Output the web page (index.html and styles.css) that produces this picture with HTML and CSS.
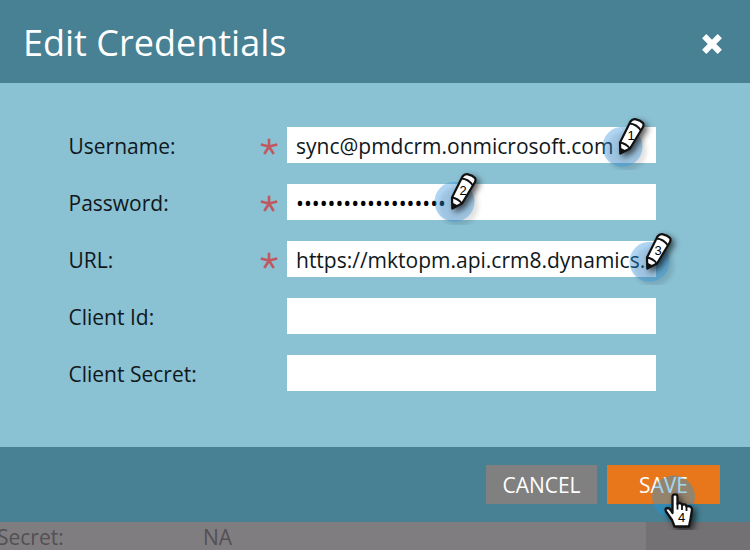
FILE: index.html
```html
<!DOCTYPE html>
<html lang="en">
<head>
<meta charset="utf-8">
<title>Edit Credentials</title>
<link rel="stylesheet" href="styles.css">
</head>
<body>
<svg class="defs" aria-hidden="true">
  <defs>
    <symbol id="close" viewBox="0 0 24 24"><path d="M4.200 4.200L19.800 19.800M19.800 4.200L4.200 19.800" stroke="#fff" stroke-width="6"/></symbol>
    <symbol id="star" viewBox="0 0 18 18"><path d="M9 8.500V0.800M9 8.500L0.800 6.500M9 8.500L17.200 6.500M9 8.500L4.300 16M9 8.500L13.700 16" stroke="#c0595f" stroke-width="2.600" fill="none"/></symbol>
    <symbol id="pen" viewBox="0 0 60 60">
      <circle class="glow" cx="22.500" cy="36.800" r="20" fill="#2f94e0" fill-opacity=".38"/>
      <g class="shadow">
        <path d="M20 32.500L30.500 11.500Q32.500 8.700 36 9.300Q40.500 10 43 13Q44 14.500 43 17L30 38.500L20.300 43.500Z" fill="#fff" stroke="#111" stroke-width="2.200" stroke-linejoin="round"/>
        <path d="M29.500 13.500Q36.500 14 41 20.500M20 32.500Q26 33.500 30 38.500" fill="none" stroke="#111" stroke-width="1.800"/>
        <path d="M20 37.500L26 40.500L20 44Z" fill="#111"/>
      </g>
    </symbol>
    <symbol id="hand" viewBox="0 0 60 60">
      <circle cx="23.500" cy="27" r="21.500" fill="#189be8" fill-opacity=".4"/>
      <g class="shadow">
        <path d="M22.500 40V26.500Q22.500 24.300 25 24.300Q27.500 24.300 27.500 26.500V34Q29 32.300 31 33.500Q32 34 32 35Q35.500 33.200 36.500 36.300Q42 35.500 42 40L40.500 49L39 56.500H24.500L22 50L16 41.500Q14.500 38 18 38Q20 38.200 22.500 43Z" fill="#fff" stroke="#111" stroke-width="2.300" stroke-linejoin="round"/>
        <path d="M27.500 33V39.500M32 34.500V40M36.500 36V41" stroke="#111" stroke-width="1.800"/>
      </g>
    </symbol>
  </defs>
</svg>
<main class="dialog">
  <header class="head">
    <h1 class="title">Edit Credentials</h1>
    <svg class="close"><use href="#close"/></svg>
  </header>
  <form class="body">
    <div class="row"><span class="label">Username:</span><svg class="star"><use href="#star"/></svg><div class="field"><span class="user">sync@pmdcrm.onmicrosoft.com</span>
      <svg class="callout pen1" viewBox="0 0 60 60"><use href="#pen"/><text x="31" y="29.500">1</text></svg></div></div>
    <div class="row"><span class="label">Password:</span><svg class="star"><use href="#star"/></svg><div class="field"><span class="dots">•••••••••••••••••••</span>
      <svg class="callout pen2" viewBox="0 0 60 60"><use href="#pen"/><text x="31" y="29.500">2</text></svg></div></div>
    <div class="row"><span class="label">URL:</span><svg class="star"><use href="#star"/></svg><div class="field"><span class="url">https://mktopm.api.crm8.dynamics.</span>
      <svg class="callout pen3" viewBox="0 0 60 60"><use href="#pen"/><text x="31" y="29.500">3</text></svg></div></div>
    <div class="row"><span class="label">Client Id:</span><div class="field"></div></div>
    <div class="row"><span class="label">Client Secret:</span><div class="field"></div></div>
  </form>
  <footer class="foot">
    <div class="button cancel">CANCEL</div>
    <div class="button save">SAVE
      <svg class="callout click" viewBox="0 0 60 60"><use href="#hand"/><text x="31.500" y="52">4</text></svg>
    </div>
  </footer>
</main>
<div class="page"><div class="details"><span class="key">Secret:</span><span>NA</span></div></div>
</body>
</html>
```

FILE: styles.css
```css
* { box-sizing: border-box; }
body { margin: 0; width: 750px; height: 550px; overflow: hidden; font-family: "Open Sans", sans-serif; font-size: 21px; color: #10181b; background: #747175; }
.defs { position: absolute; width: 0; height: 0; }
.head { height: 83px; background: #478193; display: flex; align-items: center; justify-content: space-between; padding: 4px 26px 0 23px; }
.title { margin: -2px 0 0; font-size: 36px; font-weight: 400; color: #fff; line-height: 50px; }
.close { width: 24px; height: 24px; }
.body { height: 364px; padding: 44px 0 0 68px; background: #8ac1d3; display: flex; flex-direction: column; gap: 21px; }
.row { display: flex; align-items: center; width: 588px; height: 36px; }
.label { width: 192px; line-height: 36px; padding: 2px 0 0 0.5px; white-space: nowrap; }
.star { width: 18px; height: 18px; margin: 4px 0 0; }
.field { position: relative; width: 369px; height: 36px; margin-left: auto; padding: 2px 9px 0; background: #fff; line-height: 34px; white-space: nowrap; }
.dots { font-size: 21px; color: #000; }
.callout { position: absolute; width: 60px; height: 60px; overflow: visible; z-index: 1; }
.callout text { font: 13px "Liberation Sans", sans-serif; text-anchor: middle; fill: #000; }
.shadow { filter: drop-shadow(3px 3px 3px rgba(0, 0, 0, .65)); }
.glow { filter: drop-shadow(4px 4px 2px rgba(0, 0, 0, .3)); }
.pen1 { left: 313px; top: -17px; }
.pen2 { left: 145px; top: -19px; }
.pen3 { left: 340px; top: -16px; }
.foot { height: 75px; padding: 18px 30px 0 0; background: #478193; display: flex; justify-content: flex-end; gap: 10px; }
.button { position: relative; height: 39px; line-height: 41px; text-align: center; color: #fff; }
.cancel { width: 111px; background: #808080; }
.save { width: 113px; background: #e8761b; }
.click { left: 43px; top: 5px; }
.page { height: 28px; background: #747175; }
.details { width: 646px; height: 28px; padding-top: 1px; background: #807d81; color: #525053; display: flex; line-height: 29px; }
.key { width: 206px; margin-left: -3px; }
```
